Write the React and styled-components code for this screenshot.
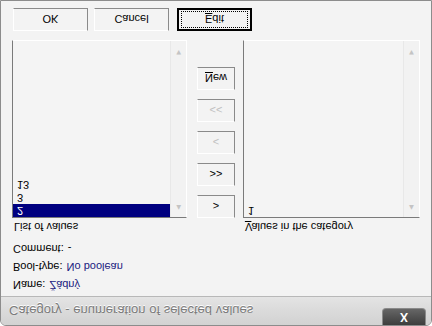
import React from "react";
import styled, { createGlobalStyle } from "styled-components";

const Global = createGlobalStyle`
  html, body { margin: 0; padding: 0; background: #ffffff; }
  #root { width: 432px; height: 326px; overflow: hidden; }
`;

// the whole window is shown upside down in the reference
const Flip = styled.div`
  width: 432px;
  height: 326px;
  transform: scaleY(-1);
`;

const Window = styled.div`
  box-sizing: border-box;
  width: 432px;
  height: 326px;
  border: 1px solid #8c8c8c;
  border-radius: 6px 6px 0 0;
  background: #f3f3f3;
  display: flex;
  flex-direction: column;
  font-family: "Liberation Sans", Tahoma, sans-serif;
  font-size: 11px;
  color: #000;
  overflow: hidden;
`;

const TitleBar = styled.div`
  height: 28px;
  flex: none;
  display: flex;
  align-items: flex-start;
  justify-content: space-between;
  background: linear-gradient(#d2d2d2, #dcdcdc 60%, #e4e4e4);
  border-bottom: 1px solid #b8b8b8;
  padding: 0 5px 0 8px;
`;

const Title = styled.div`
  margin-top: 7px;
  font-size: 13px;
  color: #7b7b7b;
  text-shadow: 0 1px 0 #ffffff;
`;

const CloseBtn = styled.div`
  width: 42px;
  height: 16px;
  background: linear-gradient(#3d3d3d, #666666);
  border: 1px solid #8a8a8a;
  border-top: none;
  border-radius: 0 0 4px 4px;
  color: #fff;
  font-weight: bold;
  font-size: 12px;
  display: flex;
  align-items: center;
  justify-content: center;
`;

const Body = styled.div`
  flex: 1;
  padding: 5px 11px 0 11px;
  display: flex;
  flex-direction: column;
`;

const Info = styled.div`
  display: flex;
  flex-direction: column;
  gap: 5px;
  padding-left: 1px;
`;

const InfoRow = styled.div`
  display: flex;
  gap: 4px;
  height: 13px;
  line-height: 13px;
`;

const Value = styled.span`
  color: #1a1a80;
`;

const Panels = styled.div`
  display: flex;
  margin-top: 9px;
`;

const Column = styled.div`
  display: flex;
  flex-direction: column;
  width: ${(p) => p.$w}px;
`;

const Label = styled.div`
  height: 13px;
  line-height: 13px;
  padding-left: 2px;
  margin-bottom: 2px;
`;

const ListBox = styled.div`
  box-sizing: border-box;
  height: 178px;
  border: 1px solid;
  border-color: #7a7a7a #ffffff #ffffff #7a7a7a;
  background: #f4f4f4;
  display: flex;
`;

const Items = styled.div`
  flex: 1;
  display: flex;
  flex-direction: column;
`;

const Item = styled.div`
  height: 13px;
  line-height: 13px;
  padding-left: 4px;
  background: ${(p) => (p.$sel ? "#000080" : "transparent")};
  color: ${(p) => (p.$sel ? "#ffffff" : "#000")};
`;

const Scroll = styled.div`
  width: 15px;
  background: #f2f2f2;
  border-left: 1px solid #e8e8e8;
  display: flex;
  flex-direction: column;
  justify-content: space-between;
  align-items: center;
  padding: 5px 0 7px;
  color: #c4c4c4;
  font-size: 8px;
`;

const Middle = styled.div`
  width: 56px;
  display: flex;
  flex-direction: column;
  align-items: center;
  gap: 9px;
  padding-top: 15px;
  padding-left: 2px;
  box-sizing: border-box;
`;

const SmallBtn = styled.div`
  box-sizing: border-box;
  width: 38px;
  height: 23px;
  border: 1px solid;
  border-color: #ffffff #8a8a8a #8a8a8a #ffffff;
  background: #f3f3f3;
  display: flex;
  align-items: center;
  justify-content: center;
  color: ${(p) => (p.$off ? "#c0c0c0" : "#000")};
  font-size: 11px;
`;

const Buttons = styled.div`
  display: flex;
  gap: 6px;
  margin-top: 9px;
`;

const Btn = styled.div`
  box-sizing: border-box;
  width: 75px;
  height: 23px;
  border: 1px solid;
  border-color: #ffffff #8a8a8a #8a8a8a #ffffff;
  background: #f3f3f3;
  display: flex;
  align-items: center;
  justify-content: center;
  font-size: 11px;
  margin-left: ${(p) => p.$ml || 0}px;
`;

const DefaultBtn = styled(Btn)`
  border: 2px solid #000;
  padding: 2px;
`;

const Focus = styled.div`
  width: 100%;
  height: 100%;
  border: 1px dotted #000;
  display: flex;
  align-items: center;
  justify-content: center;
`;

const List = ({ items }) => (
  <ListBox>
    <Items>
      {items.map((it, i) => (
        <Item key={i} $sel={i === 0 && items.length > 1}>
          {it}
        </Item>
      ))}
    </Items>
    <Scroll>
      <span>▲</span>
      <span>▼</span>
    </Scroll>
  </ListBox>
);

export default function App() {
  return (
    <>
      <Global />
      <Flip>
        <Window>
          <TitleBar>
            <Title>Category - enumeration of selected values</Title>
            <CloseBtn>X</CloseBtn>
          </TitleBar>
          <Body>
            <Info>
              <InfoRow>
                <span>Name:</span>
                <Value>Žádný</Value>
              </InfoRow>
              <InfoRow>
                <span>Bool-type:</span>
                <Value>No boolean</Value>
              </InfoRow>
              <InfoRow>
                <span>Comment:</span>
                <span>-</span>
              </InfoRow>
            </Info>
            <Panels>
              <Column $w={176}>
                <Label>List of values</Label>
                <List items={["2", "3", "13"]} />
              </Column>
              <Middle>
                <SmallBtn>&gt;</SmallBtn>
                <SmallBtn>&gt;&gt;</SmallBtn>
                <SmallBtn $off>&lt;</SmallBtn>
                <SmallBtn $off>&lt;&lt;</SmallBtn>
                <SmallBtn>
                  <u>N</u>ew
                </SmallBtn>
              </Middle>
              <Column $w={178}>
                <Label>
                  <u>V</u>alues in the category
                </Label>
                <List items={["1"]} />
              </Column>
            </Panels>
            <Buttons>
              <Btn $ml={1}>OK</Btn>
              <Btn>Cancel</Btn>
              <DefaultBtn $ml={2}>
                <Focus>
                  <u>E</u>dit
                </Focus>
              </DefaultBtn>
            </Buttons>
          </Body>
        </Window>
      </Flip>
    </>
  );
}
